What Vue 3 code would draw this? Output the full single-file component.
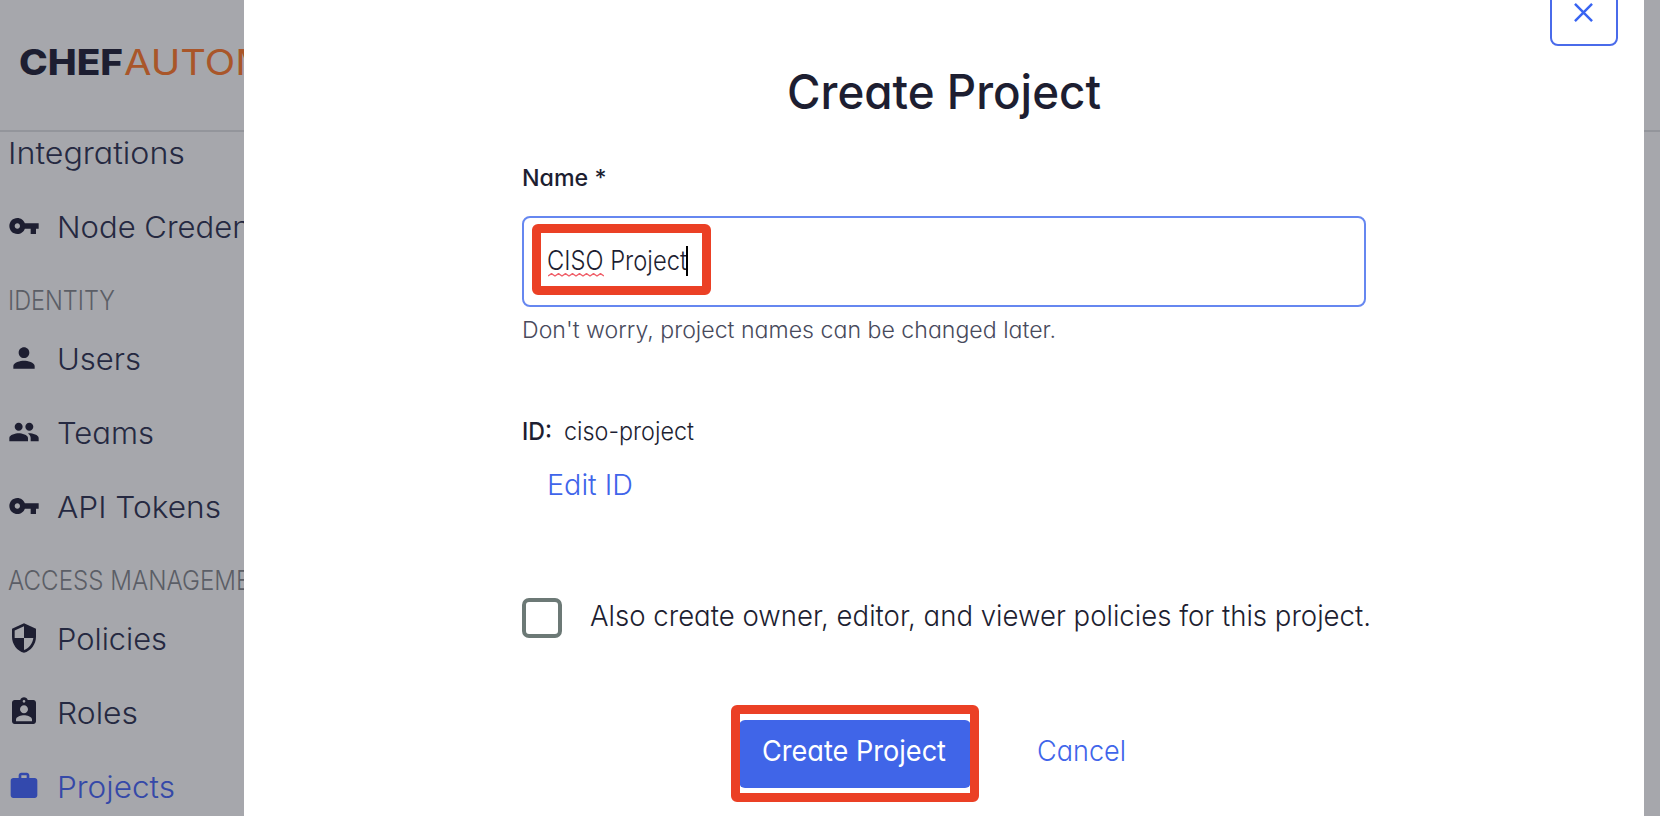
<script setup>
const icons = {
  key: 'M12.65 10C11.83 7.67 9.61 6 7 6c-3.31 0-6 2.69-6 6s2.69 6 6 6c2.61 0 4.83-1.67 5.65-4H17v4h4v-4h2v-4H12.65zM7 14c-1.1 0-2-.9-2-2s.9-2 2-2 2 .9 2 2-.9 2-2 2z',
  person: 'M12 12c2.21 0 4-1.79 4-4s-1.79-4-4-4-4 1.79-4 4 1.79 4 4 4zm0 2c-2.67 0-8 1.34-8 4v2h16v-2c0-2.66-5.33-4-8-4z',
  group: 'M16 11c1.66 0 2.99-1.34 2.99-3S17.66 5 16 5c-1.66 0-3 1.34-3 3s1.34 3 3 3zm-8 0c1.66 0 2.99-1.34 2.99-3S9.66 5 8 5C6.34 5 5 6.34 5 8s1.34 3 3 3zm0 2c-2.33 0-7 1.17-7 3.5V19h14v-2.5c0-2.33-4.67-3.5-7-3.5zm8 0c-.29 0-.62.02-.97.05 1.16.84 1.97 1.97 1.97 3.45V19h6v-2.5c0-2.33-4.67-3.5-7-3.5z',
  shield: 'M12 1L3 5v6c0 5.55 3.84 10.74 9 12 5.16-1.26 9-6.45 9-12V5l-9-4zm0 10.99h7c-.53 4.12-3.28 7.79-7 8.94V12H5V6.3l7-3.11v8.8z',
  badge: 'M19 3h-4.18C14.4 1.84 13.3 1 12 1c-1.3 0-2.4.84-2.82 2H5c-1.1 0-2 .9-2 2v14c0 1.1.9 2 2 2h14c1.1 0 2-.9 2-2V5c0-1.1-.9-2-2-2zm-7 0c.55 0 1 .45 1 1s-.45 1-1 1-1-.45-1-1 .45-1 1-1zm0 4c1.66 0 3 1.34 3 3s-1.34 3-3 3-3-1.34-3-3 1.34-3 3-3zm6 12H6v-1.4c0-2 4-3.1 6-3.1s6 1.1 6 3.1V19z',
  work: 'M20 6h-4V4c0-1.11-.89-2-2-2h-4c-1.11 0-2 .89-2 2v2H4c-1.11 0-1.99.89-1.99 2L2 19c0 1.11.89 2 2 2h16c1.11 0 2-.89 2-2V8c0-1.11-.89-2-2-2zm-6 0h-4V4h4v2z',
}

const nav = [
  { label: 'Integrations', width: 177 },
  { label: 'Node Credentials', icon: 'key', width: 252 },
  { label: 'IDENTITY', heading: true, width: 107 },
  { label: 'Users', icon: 'person', width: 84 },
  { label: 'Teams', icon: 'group', width: 97 },
  { label: 'API Tokens', icon: 'key', width: 164 },
  { label: 'ACCESS MANAGEMENT', heading: true, width: 276 },
  { label: 'Policies', icon: 'shield', width: 110 },
  { label: 'Roles', icon: 'badge', width: 81 },
  { label: 'Projects', icon: 'work', active: true, width: 118 },
]

// Condenses or widens a label so that it occupies the given advance width.
const vFit = {
  mounted(el, { value }) {
    const scale = value / el.getBoundingClientRect().width
    el.style.transform = `scaleX(${scale})`
    el.style.marginRight = `${value - el.offsetWidth}px`
  },
}
</script>

<template>
  <div class="app">
    <aside class="sidebar">
      <header class="brand">
        <span v-fit="104" class="brand-bold">CHEF</span>
        <span v-fit="221" class="brand-light">AUTOMATE</span>
      </header>
      <nav class="menu">
        <div
          v-for="item in nav"
          :key="item.label"
          class="row"
          :class="{ heading: item.heading, active: item.active }"
        >
          <svg v-if="item.icon" class="icon" viewBox="0 0 24 24"><path :d="icons[item.icon]" /></svg>
          <span v-fit="item.width" class="t">{{ item.label }}</span>
        </div>
      </nav>
    </aside>

    <main class="modal">
      <button class="close" aria-label="Close">
        <svg viewBox="0 0 20 20"><path d="M1 1L19 19M19 1L1 19" /></svg>
      </button>
      <h1 class="title"><span v-fit="314" class="t">Create Project</span></h1>

      <div class="form">
        <label class="label"><span v-fit="84.5" class="t">Name *</span></label>
        <div class="input">
          <span class="value">
            <span v-fit="140" class="t">CISO Project</span>
            <svg class="squiggle" viewBox="0 0 56 4"><path d="M0 3 l3.5-2.4 3.5 2.4 3.5-2.4 3.5 2.4 3.5-2.4 3.5 2.4 3.5-2.4 3.5 2.4 3.5-2.4 3.5 2.4 3.5-2.4 3.5 2.4 3.5-2.4 3.5 2.4 3.5-2.4 3.5 2.4" /></svg>
            <i class="caret"></i>
          </span>
          <i class="mark mark-input"></i>
        </div>
        <p class="hint"><span v-fit="534" class="t">Don't worry, project names can be changed later.</span></p>
        <p class="id">
          <b v-fit="30" class="t">ID:</b>
          <span v-fit="130" class="t id-value">ciso-project</span>
        </p>
        <a class="edit"><span v-fit="86" class="t">Edit ID</span></a>
        <label class="check">
          <i class="box"></i>
          <span v-fit="781" class="t">Also create owner, editor, and viewer policies for this project.</span>
        </label>
        <div class="actions">
          <button class="primary">
            <span v-fit="184" class="t">Create Project</span>
            <i class="mark mark-button"></i>
          </button>
          <a class="cancel"><span v-fit="89" class="t">Cancel</span></a>
        </div>
      </div>
    </main>
    <div class="backdrop"></div>
  </div>
</template>

<style>
body { margin: 0; overflow: hidden; }
</style>

<style scoped>
.app {
  display: flex;
  width: 1660px;
  height: 816px;
  overflow: hidden;
  background: #a6a7ac;
  font-family: Inter, "Open Sans", sans-serif;
  font-feature-settings: "cv11" 1;
  color: #1d1e31;
}
* { box-sizing: border-box; }
.t, .brand-bold, .brand-light {
  display: inline-block;
  flex: none;
  white-space: pre;
  transform-origin: 0 50%;
}
.sidebar { width: 244px; flex: none; overflow: hidden; }
.brand {
  display: flex;
  height: 132px;
  padding: 0 0 7px 19px;
  align-items: center;
  border-bottom: 2px solid #93959b;
  font-size: 35px;
}
.brand-bold { font-weight: 800; }
.brand-light { margin-left: 1px; font-weight: 400; color: #a9562a; }
.menu { margin-top: -16px; }
.row {
  display: flex;
  align-items: center;
  height: 74px;
  padding-left: 8px;
  font-size: 30px;
  font-weight: 350;
  line-height: 40px;
  color: #252941;
}
.heading {
  height: 58px;
  padding-top: 16px;
  font-size: 27px;
  font-weight: 300;
  color: #5b5e66;
}
.icon { width: 32px; height: 32px; margin: -2px 17px 0 0; flex: none; fill: #1d1e31; }
.active { color: #3549a8; }
.active .icon { fill: #3349ad; }

.modal { position: relative; width: 1399.5px; flex: none; background: #fff; }
.close {
  position: absolute;
  top: -22px;
  right: 26px;
  display: flex;
  align-items: center;
  justify-content: center;
  width: 68px;
  height: 68px;
  padding: 0;
  border: 2px solid #4a6bea;
  border-radius: 8px;
  background: #fff;
}
.close svg { display: block; width: 19px; height: 19px; fill: none; stroke: #3864f2; stroke-width: 2.6; }
.title {
  margin: 0;
  padding: 61.5px 0 0 543px;
  height: 147px;
  font-size: 48px;
  font-weight: 500;
  line-height: 60px;
}
.form { padding-left: 278px; }
.label { display: block; height: 69px; padding-top: 16px; font-size: 22.5px; font-weight: 500; line-height: 30px; }
.input {
  position: relative;
  display: flex;
  width: 844px;
  height: 91px;
  padding: 0 0 1px 23px;
  align-items: center;
  border: 2px solid #6687f0;
  border-radius: 8px;
}
.value { position: relative; font-size: 27px; font-weight: 350; line-height: 36px; }
.squiggle { position: absolute; left: 1px; top: 30px; width: 56px; height: 4px; fill: none; stroke: #f0606a; stroke-width: 1.4; }
.caret { position: absolute; left: 139px; top: 3px; width: 2px; height: 30px; background: #000; }
.mark { position: absolute; border: 9px solid #eb4025; border-radius: 6px; }
.mark-input { left: 7.5px; top: 5.5px; width: 179.5px; height: 71px; }
.hint { margin: 0; height: 90px; padding-top: 8px; font-size: 22.5px; font-weight: 300; line-height: 30px; color: #484a5c; }
.id { display: flex; margin: 0; height: 70px; padding-top: 19px; font-size: 24.5px; font-weight: 350; line-height: 30px; }
.id b { font-weight: 500; }
.id-value { margin-left: 12px; }
.edit { display: block; height: 131px; padding: 0 0 0 25px; font-size: 29px; font-weight: 350; line-height: 36px; color: #3f65ea; }
.check { display: flex; height: 122px; align-items: flex-start; font-size: 28.5px; font-weight: 350; line-height: 36px; }
.box { width: 40px; height: 40px; margin: 0 28px 0 0; border: 4px solid #6c7976; border-radius: 7px; flex: none; }
.actions { display: flex; height: 68px; padding-left: 217px; }
.primary {
  position: relative;
  width: 232px;
  height: 68px;
  padding: 0 0 6px 23px;
  border: 0;
  border-radius: 6px;
  background: #4065e8;
  color: #fff;
  font: 400 28.5px/36px Inter, "Open Sans", sans-serif;
  font-feature-settings: "cv11" 1;
  text-align: left;
}
.mark-button { left: -8px; top: -15.5px; width: 248px; height: 97px; }
.cancel { margin-left: 66px; padding-top: 13px; font-size: 28.5px; font-weight: 350; line-height: 36px; color: #3f65ea; }
.backdrop { flex: 1; height: 132px; border-bottom: 2px solid #93959b; }
</style>
